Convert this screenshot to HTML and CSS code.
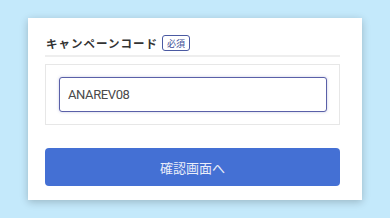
FILE: index.html
```html
<!DOCTYPE html>
<html lang="ja">
<head>
  <meta charset="UTF-8" />
  <meta name="viewport" content="width=device-width, initial-scale=1.0"/>
  <title>キャンペーンコード</title>
  <link rel="stylesheet" href="styles.css">
</head>
<body>
  <div class="card">
    <div class="field-head">
      <span class="field-title">キャンペーンコード</span>
      <span class="required">必須</span>
    </div>

    <div class="field-box">
      <input class="code-input" type="text" value="ANAREV08">
    </div>

    <button class="submit-btn">確認画面へ</button>
  </div>
</body>
</html>
```

FILE: styles.css
```css
body {
  margin: 0;
  padding: 18px 0 0 28px;
  background-color: #c4e9fb;
  font-family: "Noto Sans CJK JP", "Noto Sans", sans-serif;
  height: 218px;
  box-sizing: border-box;
  overflow: hidden;
}

.card {
  width: 334px;
  height: 182px;
  box-sizing: border-box;
  background: #fff;
  padding: 15px 22px 0 17px;
  box-shadow: 0 2px 8px rgba(0, 0, 0, 0.22);
}

.field-head {
  display: flex;
  align-items: center;
  height: 20px;
  padding: 0 0 2px 1px;
  border-bottom: 2px solid #eeeeee;
}

.field-title {
  font-size: 11.5px;
  font-weight: bold;
  color: #333;
  letter-spacing: 1px;
}

.required {
  margin-left: 4px;
  width: 28px;
  height: 16px;
  box-sizing: border-box;
  border: 1px solid #4b5aa2;
  border-radius: 3px;
  font-size: 9px;
  color: #3d4c94;
  display: flex;
  align-items: center;
  justify-content: center;
}

.field-box {
  margin-top: 7px;
  border: 1px solid #e7e7e7;
  padding: 12px 12px 12px 13px;
}

.code-input {
  display: block;
  width: 100%;
  height: 35px;
  box-sizing: border-box;
  border: 1.5px solid #5a60a8;
  border-radius: 3px;
  box-shadow: 0 0 3px rgba(90, 96, 168, 0.35);
  padding: 0 8px;
  font-family: Roboto, "Noto Sans", sans-serif;
  font-size: 13px;
  letter-spacing: -0.4px;
  color: #4a4a4a;
  outline: none;
}

.submit-btn {
  display: block;
  width: 100%;
  height: 38px;
  margin-top: 23px;
  border: none;
  border-radius: 4px;
  background-color: #4470d4;
  color: #e9edf9;
  font-family: "Noto Sans CJK JP", "Noto Sans", sans-serif;
  font-size: 13px;
  cursor: pointer;
}
```
